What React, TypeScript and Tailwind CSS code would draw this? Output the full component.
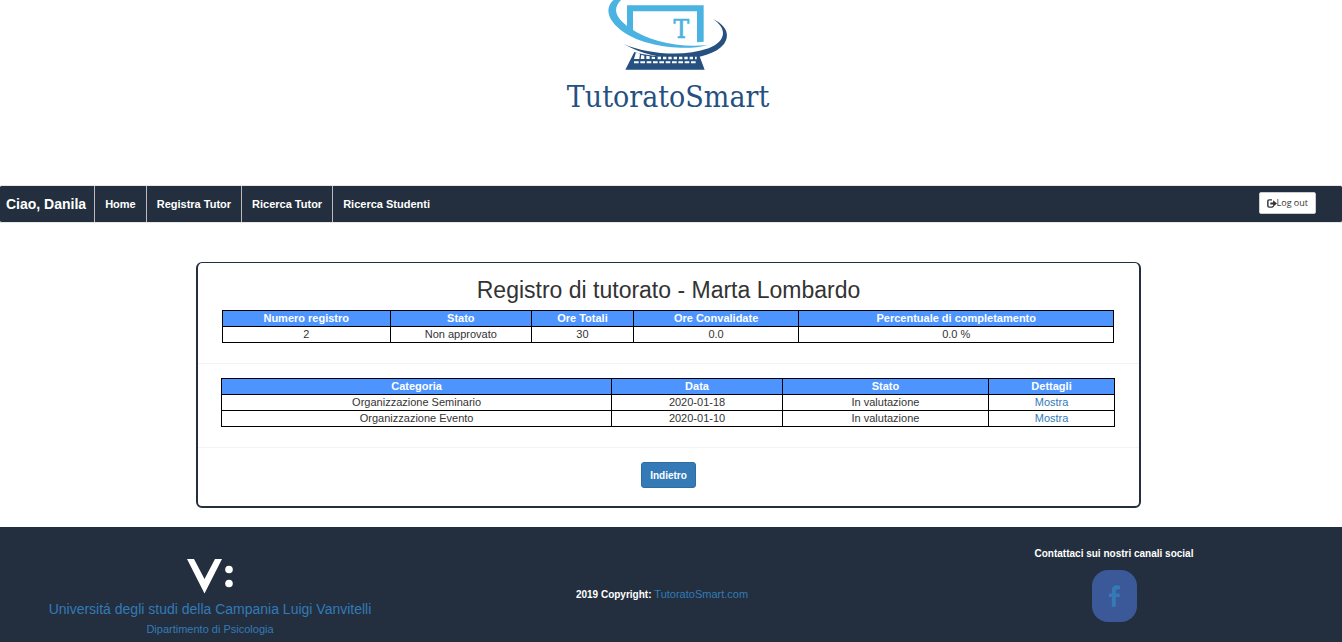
import type { ReactNode } from "react";

const navLinks = ["Home", "Registra Tutor", "Ricerca Tutor", "Ricerca Studenti"];

const activities = [
  { category: "Organizzazione Seminario", date: "2020-01-18", status: "In valutazione" },
  { category: "Organizzazione Evento", date: "2020-01-10", status: "In valutazione" },
];

function Logo() {
  return (
    <svg viewBox="0 0 708 225" className="block h-[75px] w-[236px]" aria-hidden="true">
      <path d="M231 95V16H461V125L441 127V34H249V104Z" fill="#4ab3e2" />
      <path
        d="M203 -8C160 14 166 62 226 100C280 136 400 156 474 135C385 144 296 124 240 84C190 50 186 20 222 -8Z"
        fill="#4ab3e2"
      />
      <path
        d="M489 57C530 84 532 122 476 145C400 172 290 162 221 132C270 160 330 176 400 176C450 174 500 160 522 132C542 104 528 76 489 57Z"
        fill="#25507f"
      />
      <path d="M253 156C310 172 390 176 447 164L464 209H226Z" fill="#25507f" />
      <path
        d="M258 157L252 177H268L270 161ZM274 164L272 177H283V167ZM289 167V177H299V169ZM305 170V177H315V171Z"
        fill="#fff"
      />
      <path d="M323 174H440" stroke="#fff" strokeWidth="7" strokeDasharray="10 6" />
      <path d="M252 187H442" stroke="#fff" strokeWidth="6" strokeDasharray="14 5" />
      <text
        x="394"
        y="113"
        textAnchor="middle"
        fill="#4ab3e2"
        stroke="#4ab3e2"
        strokeWidth="2"
        fontSize="78"
        fontFamily="'DejaVu Serif Condensed', 'DejaVu Serif', serif"
      >
        T
      </text>
    </svg>
  );
}

function LogOutIcon() {
  return (
    <svg viewBox="0 0 18 16" className="h-[9px] w-[10px]" aria-hidden="true">
      <path d="M9 1.5H4Q1.500 1.500 1.500 4V12Q1.500 14.500 4 14.500H9Q11 14.500 11 12.500" fill="none" stroke="#333" strokeWidth="2.600" />
      <path d="M6 6H11V2L18 8L11 14V10H6Z" fill="#333" />
    </svg>
  );
}

function Th({ className = "", children }: { className?: string; children: ReactNode }) {
  return (
    <th scope="col" className={`border border-black bg-[#4d94ff] p-0 font-bold text-white ${className}`}>
      {children}
    </th>
  );
}

function Td({ children }: { children: ReactNode }) {
  return <td className="border border-black p-0">{children}</td>;
}

export default function App() {
  return (
    <div className="bg-white font-['Liberation_Sans',Arial,sans-serif] text-[11px] leading-[15px] text-[#333]">
      <header className="flex h-[185px] flex-col items-center pr-[6px]">
        <Logo />
        <p className="mt-1 font-['DejaVu_Serif_Condensed','DejaVu_Serif',serif] text-[30px] leading-9 text-[#25507f]">
          TutoratoSmart
        </p>
      </header>

      <nav className="flex h-[38px] items-stretch justify-between rounded-xs border-y border-[#e7e7e7] bg-[#232f3e] font-bold text-white">
        <div className="flex divide-x divide-[#bbb]">
          <span className="flex items-center pr-2 pl-[6px] text-sm">Ciao, Danila</span>
          {navLinks.map((label) => (
            <a key={label} href="#" className="flex items-center px-[10px]">
              {label}
            </a>
          ))}
        </div>
        <button
          type="button"
          className="mt-[6px] mr-[26px] flex h-[22px] items-center rounded-xs border border-[#ccc] bg-white px-[7px] font-['Open_Sans',sans-serif] text-[9px] leading-3 font-normal text-[#333]"
        >
          <LogOutIcon />
          Log out
        </button>
      </nav>

      <main className="pt-[39px] pr-[5px] pb-[19px]">
        <section className="mx-auto w-[945px] max-w-full rounded-md border-2 border-t border-[#232f3e] pt-3 pb-[18px] text-center">
          <h1 className="text-[23px] leading-[30px]">Registro di tutorato - Marta Lombardo</h1>
          <div className="pt-[5px] pr-[25px] pl-6">
            <table className="w-full table-fixed border-collapse">
              <thead>
                <tr>
                  <Th className="w-[18.8%]">Numero registro</Th>
                  <Th className="w-[15.9%]">Stato</Th>
                  <Th className="w-[11.4%]">Ore Totali</Th>
                  <Th className="w-[18.6%]">Ore Convalidate</Th>
                  <Th>Percentuale di completamento</Th>
                </tr>
              </thead>
              <tbody>
                <tr>
                  <Td>2</Td>
                  <Td>Non approvato</Td>
                  <Td>30</Td>
                  <Td>0.0</Td>
                  <Td>0.0 %</Td>
                </tr>
              </tbody>
            </table>
          </div>
          <hr className="mt-5 mb-[14px] border-[#f3f3f3]" />
          <div className="pr-6 pl-[23px]">
            <table className="w-full table-fixed border-collapse">
              <thead>
                <tr>
                  <Th className="w-[43.7%]">Categoria</Th>
                  <Th className="w-[19.1%]">Data</Th>
                  <Th className="w-[23.1%]">Stato</Th>
                  <Th>Dettagli</Th>
                </tr>
              </thead>
              <tbody>
                {activities.map((activity) => (
                  <tr key={activity.date}>
                    <Td>{activity.category}</Td>
                    <Td>{activity.date}</Td>
                    <Td>{activity.status}</Td>
                    <Td>
                      <a href="#" className="text-[#337ab7]">
                        Mostra
                      </a>
                    </Td>
                  </tr>
                ))}
              </tbody>
            </table>
          </div>
          <hr className="mt-5 mb-[14px] border-[#f3f3f3]" />
          <button
            type="button"
            className="h-[26px] rounded-[3px] border border-[#2e6da4] bg-[#337ab7] px-2 text-[10px] font-bold text-white"
          >
            Indietro
          </button>
        </section>
      </main>

      <footer className="overflow-hidden bg-[#232f3e] text-center">
        <div className="mr-0.5 -ml-4 grid h-[115px] grid-cols-3">
          <div className="flex flex-col items-center pt-[31px]">
            <svg viewBox="0 0 47 36" className="h-9 w-[47px]" aria-hidden="true">
              <path d="M0 1H7L17.500 21L28 1H35L17.500 35.500Z" fill="#fff" />
              <circle cx="42" cy="11.500" r="3.800" fill="#fff" />
              <circle cx="42" cy="25.500" r="3.800" fill="#fff" />
            </svg>
            <a href="#" className="mt-[5px] text-sm leading-5 text-[#337ab7]">
              Universitá degli studi della Campania Luigi Vanvitelli
            </a>
            <a href="#" className="mt-[3px] text-[#337ab7]">
              Dipartimento di Psicologia
            </a>
          </div>
          <p className="pt-[60px]">
            <strong className="text-[10px] text-white">2019 Copyright:</strong>{" "}
            <a href="#" className="text-[#337ab7]">
              TutoratoSmart.com
            </a>
          </p>
          <div className="flex flex-col items-center pt-[19px]">
            <p className="text-[10px] font-bold text-white">Contattaci sui nostri canali social</p>
            <a
              href="#"
              aria-label="Facebook"
              className="mt-[9px] flex h-[52px] w-[45px] items-center justify-center rounded-2xl bg-[#3b5998]"
            >
              <svg viewBox="0 0 34 66" className="h-[22px] w-[11px]" aria-hidden="true">
                <path
                  d="M34 1V12H27Q21 12 21 18V25H33V36H21V66H9V36H0V25H9V16Q9 0 25 0Q31 0 34 1Z"
                  fill="#337ab7"
                />
              </svg>
            </a>
          </div>
        </div>
      </footer>
    </div>
  );
}
